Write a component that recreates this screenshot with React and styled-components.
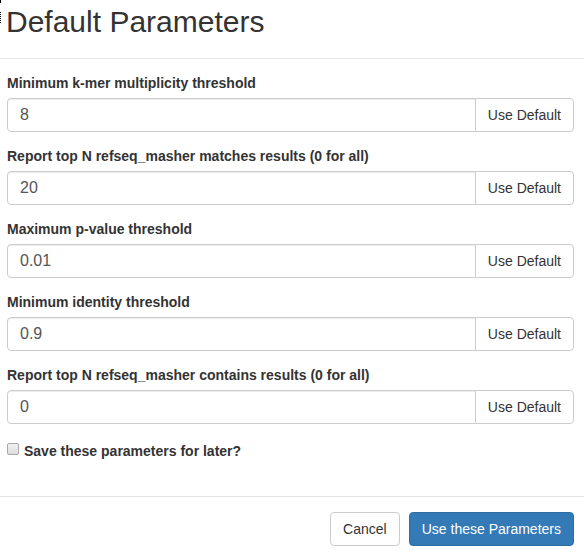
import React from "react";
import styled, { createGlobalStyle } from "styled-components";

const Global = createGlobalStyle`
  html, body { margin: 0; padding: 0; background: #fff; }
  body {
    font-family: "Liberation Sans", Arial, Helvetica, sans-serif;
    font-size: 14px;
    line-height: 1.42857;
    color: #333;
  }
  * { box-sizing: border-box; }
`;

const Modal = styled.div`
  position: relative;
  width: 584px;
  background: #fff;
`;

const FocusMark = styled.span`
  position: absolute;
  left: 0;
  top: ${(p) => p.$top}px;
  height: ${(p) => p.$h}px;
  border-left: 1px dotted #000;
`;

const Header = styled.div`
  padding: 5px 10px 20px 6px;
  border-bottom: 1px solid #e5e5e5;
`;

const Title = styled.h2`
  margin: 0;
  font-size: 30px;
  font-weight: 500;
  line-height: 1.1;
  color: #333;
`;

const Body = styled.div`
  padding: 14px 10px 35px 7px;
`;

const FormGroup = styled.div`
  margin-bottom: 14px;
`;

const Label = styled.label`
  display: block;
  font-weight: bold;
  font-size: 14px;
  line-height: 20px;
  margin-bottom: 5px;
  color: #333;
`;

const InputGroup = styled.div`
  display: flex;
`;

const Input = styled.input`
  flex: 1;
  min-width: 0;
  height: 34px;
  padding: 6px 12px;
  font-family: inherit;
  font-size: 16px;
  color: #555;
  background: #fff;
  border: 1px solid #ccc;
  border-radius: 4px 0 0 4px;
  box-shadow: inset 0 1px 1px rgba(0, 0, 0, 0.075);
  outline: none;
`;

const Button = styled.button`
  height: 34px;
  padding: 6px 12px;
  font-family: inherit;
  font-size: 14px;
  line-height: 20px;
  white-space: nowrap;
  cursor: pointer;
  border: 1px solid ${(p) => (p.$primary ? "#2e6da4" : "#ccc")};
  background: ${(p) => (p.$primary ? "#337ab7" : "#fff")};
  color: ${(p) => (p.$primary ? "#fff" : "#333")};
  border-radius: 4px;
`;

const AddonButton = styled(Button)`
  margin-left: -1px;
  border-radius: 0 4px 4px 0;
`;

const CheckRow = styled.label`
  display: flex;
  align-items: flex-start;
  gap: 5px;
  margin-top: 17px;
  font-weight: bold;
  font-size: 14px;
  line-height: 20px;
  color: #333;
`;

const Check = styled.input`
  appearance: none;
  -webkit-appearance: none;
  width: 12px;
  height: 12px;
  margin: 2px 0 0 0;
  border: 1px solid #a9a9a9;
  border-radius: 2px;
  background: linear-gradient(#f2f2f2, #dcdcdc);
`;

const Footer = styled.div`
  display: flex;
  justify-content: flex-end;
  gap: 9px;
  padding: 15px 10px;
  border-top: 1px solid #e5e5e5;
`;

const params = [
  { label: "Minimum k-mer multiplicity threshold", value: "8" },
  { label: "Report top N refseq_masher matches results (0 for all)", value: "20" },
  { label: "Maximum p-value threshold", value: "0.01" },
  { label: "Minimum identity threshold", value: "0.9" },
  { label: "Report top N refseq_masher contains results (0 for all)", value: "0" },
];

export default function App() {
  return (
    <>
      <Global />
      <Modal>
        <FocusMark $top={0} $h={2} />
        <FocusMark $top={12} $h={11} />
        <Header>
          <Title>Default Parameters</Title>
        </Header>
        <Body>
          {params.map((p) => (
            <FormGroup key={p.label}>
              <Label>{p.label}</Label>
              <InputGroup>
                <Input defaultValue={p.value} />
                <AddonButton type="button">Use Default</AddonButton>
              </InputGroup>
            </FormGroup>
          ))}
          <CheckRow>
            <Check type="checkbox" />
            <span>Save these parameters for later?</span>
          </CheckRow>
        </Body>
        <Footer>
          <Button type="button">Cancel</Button>
          <Button type="button" $primary>
            Use these Parameters
          </Button>
        </Footer>
      </Modal>
    </>
  );
}
